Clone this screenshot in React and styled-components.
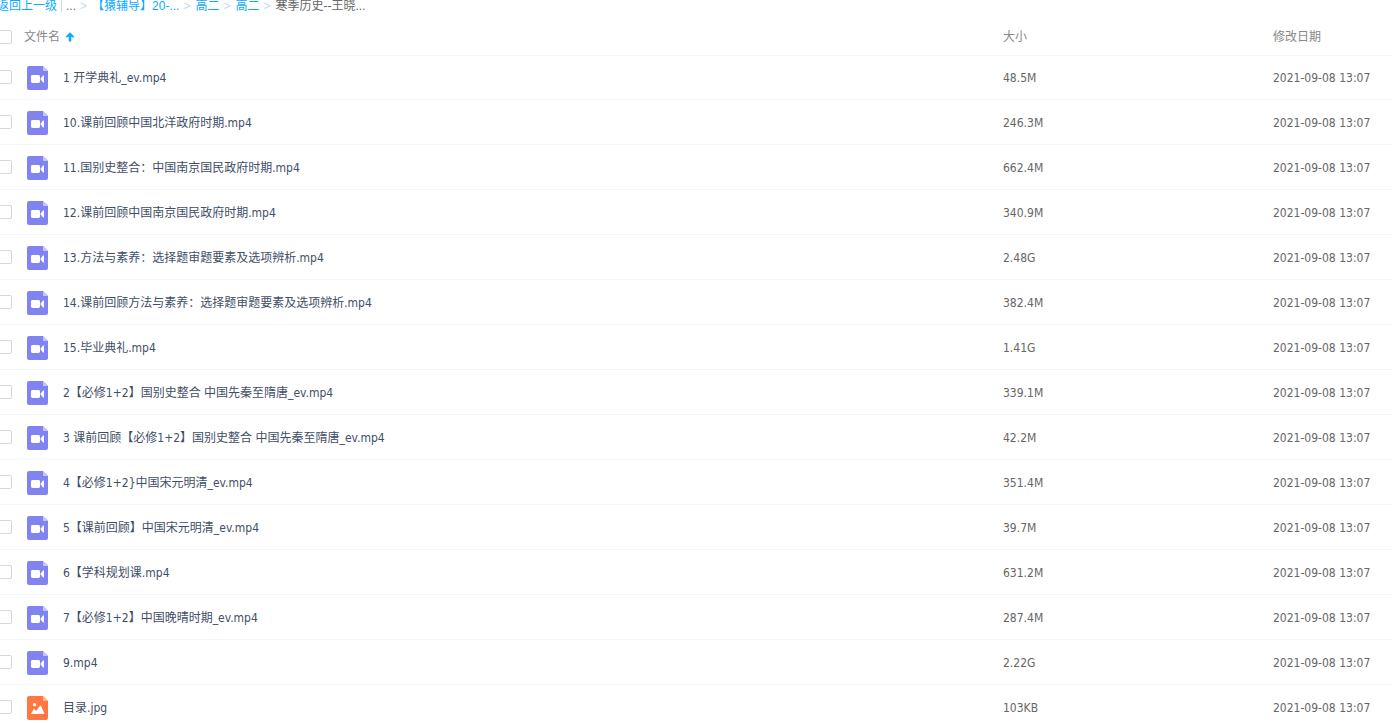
import React, { useState } from 'react';
import styled, { createGlobalStyle } from 'styled-components';

const GlobalStyle = createGlobalStyle`
  * {
    box-sizing: border-box;
  }

  body {
    margin: 0;
    background: #fff;
    color: #424e67;
    font-family: 'DejaVu Sans Condensed', 'Noto Sans', 'Noto Sans CJK SC', sans-serif;
    font-size: 12px;
    line-height: 18px;
  }
`;

const Page = styled.main`
  height: 100vh;
  overflow: hidden;
`;

const Breadcrumb = styled.nav`
  display: flex;
  align-items: center;
  height: 18px;
  margin-left: -3px;
  padding-bottom: 6px;
  font-family: 'Liberation Sans', 'Noto Sans CJK SC', sans-serif;
  white-space: nowrap;
`;

const CrumbLink = styled.a`
  color: #09aaff;
  text-decoration: none;
`;

const Divider = styled.span`
  width: 1px;
  height: 12px;
  margin: 0 4px;
  background: #c4dbfe;
`;

const Separator = styled.span`
  margin: 0 5px 0 4px;
  color: #c4d8f5;
`;

const Current = styled.span`
  color: #666;
`;

const FileTable = styled.table`
  width: 100%;
  table-layout: fixed;
  border-collapse: separate;
  border-spacing: 0;
`;

const HeadCell = styled.th`
  width: ${(props) => props.$width || 'auto'};
  height: 38px;
  padding: 1px 0 0;
  border-bottom: 1px solid #f2f6fd;
  color: #888;
  font-weight: normal;
  text-align: left;
`;

const FileRow = styled.tr`
  height: 45px;

  &:first-child {
    height: 44px;
  }

  &:hover {
    background: #f4fbff;
  }
`;

const Cell = styled.td`
  padding: 1px 0 0;
  border-bottom: 1px solid #f2f6fd;
  color: ${(props) => (props.$muted ? '#666' : '#424e67')};
  white-space: nowrap;
`;

const CheckCell = styled(Cell)`
  padding: 0 0 1px;
`;

const Checkbox = styled.input`
  display: block;
  appearance: none;
  width: 14px;
  height: 14px;
  margin: 0 0 0 -2px;
  border: 1px solid #d2d7e2;
  border-radius: 2px;
  background: #fff;

  &:checked {
    border-color: #09aaff;
    background: #09aaff;
  }
`;

const SortButton = styled.button`
  display: flex;
  align-items: center;
  gap: 5px;
  padding: 0;
  border: none;
  background: none;
  color: inherit;
  font: inherit;
  cursor: pointer;
`;

const FileLabel = styled.label`
  display: flex;
  align-items: center;
  gap: 15px;
  padding-left: 3px;
`;

const Icon = styled.svg`
  display: block;
  flex: none;
`;

const DATE = '2021-09-08 13:07';

const files = [
  { name: '1 开学典礼_ev.mp4', size: '48.5M' },
  { name: '10.课前回顾中国北洋政府时期.mp4', size: '246.3M' },
  { name: '11.国别史整合：中国南京国民政府时期.mp4', size: '662.4M' },
  { name: '12.课前回顾中国南京国民政府时期.mp4', size: '340.9M' },
  { name: '13.方法与素养：选择题审题要素及选项辨析.mp4', size: '2.48G' },
  { name: '14.课前回顾方法与素养：选择题审题要素及选项辨析.mp4', size: '382.4M' },
  { name: '15.毕业典礼.mp4', size: '1.41G' },
  { name: '2【必修1+2】国别史整合 中国先秦至隋唐_ev.mp4', size: '339.1M' },
  { name: '3 课前回顾【必修1+2】国别史整合 中国先秦至隋唐_ev.mp4', size: '42.2M' },
  { name: '4【必修1+2}中国宋元明清_ev.mp4', size: '351.4M' },
  { name: '5【课前回顾】中国宋元明清_ev.mp4', size: '39.7M' },
  { name: '6【学科规划课.mp4', size: '631.2M' },
  { name: '7【必修1+2】中国晚晴时期_ev.mp4', size: '287.4M' },
  { name: '9.mp4', size: '2.22G' },
  { name: '目录.jpg', size: '103KB', type: 'image' },
];

const FileIcon = ({ type }) => {
  const isImage = type === 'image';

  return (
    <Icon width="21" height="24" viewBox="0 0 21 24" aria-hidden="true">
      <path
        d="M2 0H16L21 5V22a2 2 0 0 1-2 2H2a2 2 0 0 1-2-2V2a2 2 0 0 1 2-2Z"
        fill={isImage ? '#ff7844' : '#8183f1'}
      />
      <path d="M16 0L21 5H17a1 1 0 0 1-1-1Z" fill={isImage ? '#ffb394' : '#c5c6fa'} />
      {isImage ? (
        <g fill="#fff">
          <circle cx="7.5" cy="8.7" r="1.6" />
          <path d="M4 18L7 12.6L9.2 15L13 9.8H14L17.5 18Z" />
        </g>
      ) : (
        <g fill="#fff">
          <rect x="4" y="9" width="9" height="8" rx="1.4" />
          <path d="M13.3 13L16 9.4H17V16.6H16Z" />
        </g>
      )}
    </Icon>
  );
};

const SortArrow = () => (
  <Icon width="10" height="10" viewBox="0 0 10 10" aria-hidden="true">
    <path d="M5 0.3L9.2 4.6L8.2 5.8L6.3 4.6V9.6H3.7V4.6L1.8 5.8L0.8 4.6Z" fill="#09aaff" />
  </Icon>
);

const App = () => {
  const [selected, setSelected] = useState([]);
  const allSelected = selected.length === files.length;

  const toggleFile = (name) => {
    setSelected(
      selected.includes(name) ? selected.filter((item) => item !== name) : [...selected, name],
    );
  };

  const toggleAll = () => {
    setSelected(allSelected ? [] : files.map((file) => file.name));
  };

  return (
    <>
      <GlobalStyle />
      <Page>
        <Breadcrumb>
          <CrumbLink href="#up">返回上一级</CrumbLink>
          <Divider />
          <Current>...</Current>
          <Separator>&gt;</Separator>
          <CrumbLink href="#course">【猿辅导】20-...</CrumbLink>
          <Separator>&gt;</Separator>
          <CrumbLink href="#grade">高二</CrumbLink>
          <Separator>&gt;</Separator>
          <CrumbLink href="#class">高二</CrumbLink>
          <Separator>&gt;</Separator>
          <Current>寒季历史--王晓...</Current>
        </Breadcrumb>

        <FileTable>
          <thead>
            <tr>
              <HeadCell $width="24px">
                <Checkbox
                  type="checkbox"
                  aria-label="全选"
                  checked={allSelected}
                  onChange={toggleAll}
                />
              </HeadCell>
              <HeadCell>
                <SortButton type="button">
                  文件名
                  <SortArrow />
                </SortButton>
              </HeadCell>
              <HeadCell $width="270px">大小</HeadCell>
              <HeadCell $width="119px">修改日期</HeadCell>
            </tr>
          </thead>
          <tbody>
            {files.map((file, index) => (
              <FileRow key={file.name}>
                <CheckCell>
                  <Checkbox
                    id={`file-${index}`}
                    type="checkbox"
                    checked={selected.includes(file.name)}
                    onChange={() => toggleFile(file.name)}
                  />
                </CheckCell>
                <Cell>
                  <FileLabel htmlFor={`file-${index}`}>
                    <FileIcon type={file.type} />
                    {file.name}
                  </FileLabel>
                </Cell>
                <Cell $muted>{file.size}</Cell>
                <Cell $muted>{DATE}</Cell>
              </FileRow>
            ))}
          </tbody>
        </FileTable>
      </Page>
    </>
  );
};

export default App;
